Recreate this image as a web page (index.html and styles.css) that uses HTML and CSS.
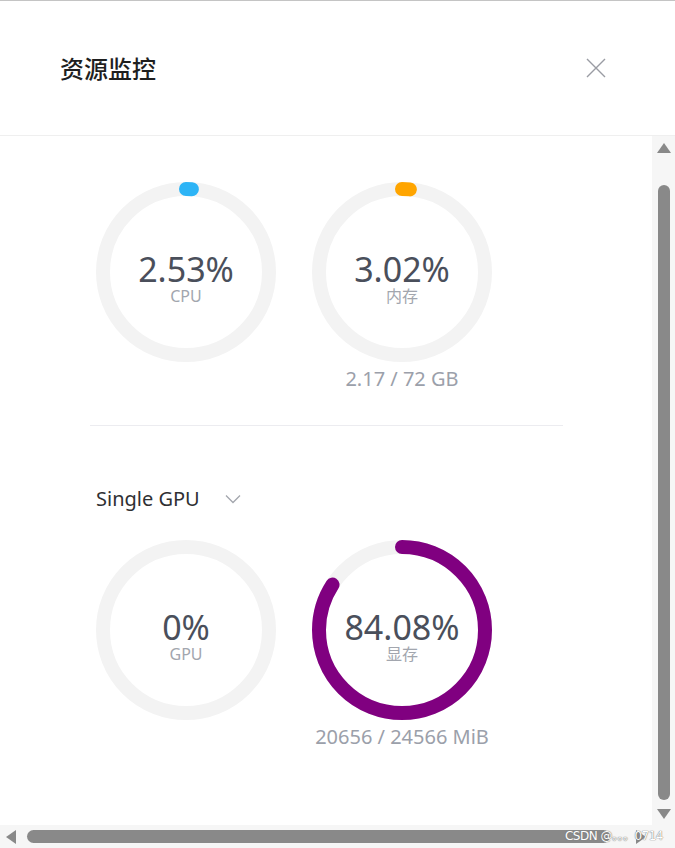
FILE: index.html
```html
<!DOCTYPE html>
<html lang="zh-CN">
<head>
<meta charset="utf-8">
<title>资源监控</title>
<link rel="stylesheet" href="styles.css">
</head>
<body>
<div class="dialog">
  <header class="dialog-header">
    <h1 class="dialog-title">资源监控</h1>
    <button class="close-btn" aria-label="关闭">
      <svg width="20" height="20" viewBox="0 0 20 20"><path d="M1 1 L19 19 M19 1 L1 19" stroke="#9a9ca3" stroke-width="1.4" fill="none"/></svg>
    </button>
  </header>
  <div class="scroll-area">
    <div class="content">
      <div class="gauge-row">
        <div class="gauge">
          <div class="ring">
            <svg width="180" height="180" viewBox="0 0 180 180">
              <circle class="track" cx="90" cy="90" r="83"/>
              <circle class="bar bar-cpu" cx="90" cy="90" r="83" stroke-dasharray="6 600"/>
            </svg>
            <div class="ring-text"><span class="value">2.53%</span><span class="label">CPU</span></div>
          </div>
        </div>
        <div class="gauge">
          <div class="ring">
            <svg width="180" height="180" viewBox="0 0 180 180">
              <circle class="track" cx="90" cy="90" r="83"/>
              <circle class="bar bar-mem" cx="90" cy="90" r="83" stroke-dasharray="8 600"/>
            </svg>
            <div class="ring-text"><span class="value">3.02%</span><span class="label">内存</span></div>
          </div>
          <div class="sub">2.17 / 72 GB</div>
        </div>
      </div>
      <div class="divider"></div>
      <div class="select">
        <span class="select-text">Single GPU</span>
        <svg class="chevron" width="16" height="10" viewBox="0 0 16 10"><path d="M1 1.5 L8 8.5 L15 1.5" stroke="#a3a6ad" stroke-width="1.3" fill="none"/></svg>
      </div>
      <div class="gauge-row">
        <div class="gauge">
          <div class="ring">
            <svg width="180" height="180" viewBox="0 0 180 180">
              <circle class="track" cx="90" cy="90" r="83"/>
            </svg>
            <div class="ring-text"><span class="value">0%</span><span class="label">GPU</span></div>
          </div>
        </div>
        <div class="gauge">
          <div class="ring">
            <svg width="180" height="180" viewBox="0 0 180 180">
              <circle class="track" cx="90" cy="90" r="83"/>
              <circle class="bar bar-vram" cx="90" cy="90" r="83" stroke-dasharray="438.5 600"/>
            </svg>
            <div class="ring-text"><span class="value">84.08%</span><span class="label">显存</span></div>
          </div>
          <div class="sub">20656 / 24566 MiB</div>
        </div>
      </div>
    </div>
    <div class="vbar">
      <span class="arrow arrow-up"></span>
      <span class="vthumb"></span>
      <span class="arrow arrow-down"></span>
    </div>
    <div class="hbar">
      <span class="arrow arrow-left"></span>
      <span class="hthumb"></span>
      <span class="arrow arrow-right"></span>
    </div>
    <div class="corner"></div>
    <div class="watermark">CSDN @。。。0714</div>
  </div>
</div>
</body>
</html>
```

FILE: styles.css
```css
* { box-sizing: border-box; }
html, body { margin: 0; padding: 0; background: #fff; }
body {
  font-family: "Noto Sans", "Open Sans", "Noto Sans CJK SC", sans-serif;
  width: 675px;
  height: 848px;
  overflow: hidden;
}
.dialog {
  height: 848px;
  border-top: 1px solid #c4c4c4;
  display: flex;
  flex-direction: column;
}
.dialog-header {
  height: 135px;
  flex: none;
  border-bottom: 1px solid #efefef;
  display: flex;
  align-items: center;
  justify-content: space-between;
  padding: 0 69px 0 60px;
}
.dialog-title {
  margin: 0;
  font-family: "Noto Sans CJK SC", sans-serif;
  font-size: 24px;
  font-weight: 500;
  color: #1f1f1f;
  line-height: 30px;
}
.close-btn {
  border: 0;
  background: none;
  padding: 0;
  width: 20px;
  height: 20px;
  display: block;
}
.close-btn svg { display: block; }
.scroll-area {
  flex: 1;
  display: grid;
  grid-template-columns: 652px 23px;
  grid-template-rows: 689px 23px;
  position: relative;
}
.content {
  padding: 46px 0 0 90px;
  overflow: hidden;
}
.gauge-row {
  display: flex;
  gap: 36px;
  padding-left: 6px;
}
.gauge {
  width: 180px;
  display: flex;
  flex-direction: column;
  align-items: center;
}
.ring {
  width: 180px;
  height: 180px;
  position: relative;
}
.ring svg { display: block; }
.track {
  fill: none;
  stroke: #f3f3f3;
  stroke-width: 14;
}
.bar {
  fill: none;
  stroke-width: 14;
  stroke-linecap: round;
  transform: rotate(-90deg);
  transform-origin: 90px 90px;
}
.bar-cpu { stroke: #2db4f6; }
.bar-mem { stroke: #ffa500; }
.bar-vram { stroke: #800080; }
.ring-text {
  position: absolute;
  inset: 0;
  display: flex;
  flex-direction: column;
  align-items: center;
  justify-content: center;
  padding-top: 11px;
}
.value {
  font-size: 34px;
  line-height: 36px;
  color: #4a4f5b;
}
.label {
  font-size: 16px;
  line-height: 18px;
  color: #a2a6ae;
  font-family: "Noto Sans", "Noto Sans CJK SC", sans-serif;
}
.sub {
  margin-top: 5px;
  font-size: 20px;
  line-height: 24px;
  color: #9ba0aa;
  white-space: nowrap;
}
.divider {
  width: 473px;
  height: 1px;
  background: #ececf0;
  margin-top: 34px;
}
.select {
  display: flex;
  align-items: center;
  margin: 61px 0 29px 6px;
  height: 24px;
}
.select-text {
  font-size: 20px;
  line-height: 24px;
  color: #2f3033;
}
.chevron { margin-left: 25px; margin-top: -1px; }
.vbar {
  background: #f6f6f6;
  display: flex;
  flex-direction: column;
  align-items: center;
  padding: 7px 0 6px 0;
}
.vthumb {
  width: 12px;
  flex: none;
  height: 615px;
  margin: 32px 0 9px;
  background: #898989;
  border-radius: 6px;
}
.hbar {
  background: #f6f6f6;
  display: flex;
  align-items: center;
  padding: 0 0 0 6px;
}
.hthumb {
  width: 583px;
  height: 13px;
  margin-left: 11px;
  background: #898989;
  border-radius: 6.5px;
}
.corner { background: #f6f6f6; }
.arrow {
  width: 0;
  height: 0;
  flex: none;
  border-style: solid;
}
.arrow-up {
  border-width: 0 7px 10px 7px;
  border-color: transparent transparent #898989 transparent;
}
.arrow-down {
  border-width: 10px 7px 0 7px;
  border-color: #898989 transparent transparent transparent;
}
.arrow-left {
  border-width: 7px 10px 7px 0;
  border-color: transparent #898989 transparent transparent;
}
.arrow-right {
  border-width: 7px 0 7px 10px;
  border-color: transparent transparent transparent #898989;
  margin-left: 26px;
}
.watermark {
  position: absolute;
  right: 12px;
  bottom: 5px;
  font-family: "DejaVu Sans", "Noto Sans CJK SC", sans-serif;
  font-size: 12px;
  line-height: 14px;
  color: #ffffff;
  text-shadow: 0 0 1px #777, 0 0 1px #777;
  letter-spacing: -0.5px;
}
```
